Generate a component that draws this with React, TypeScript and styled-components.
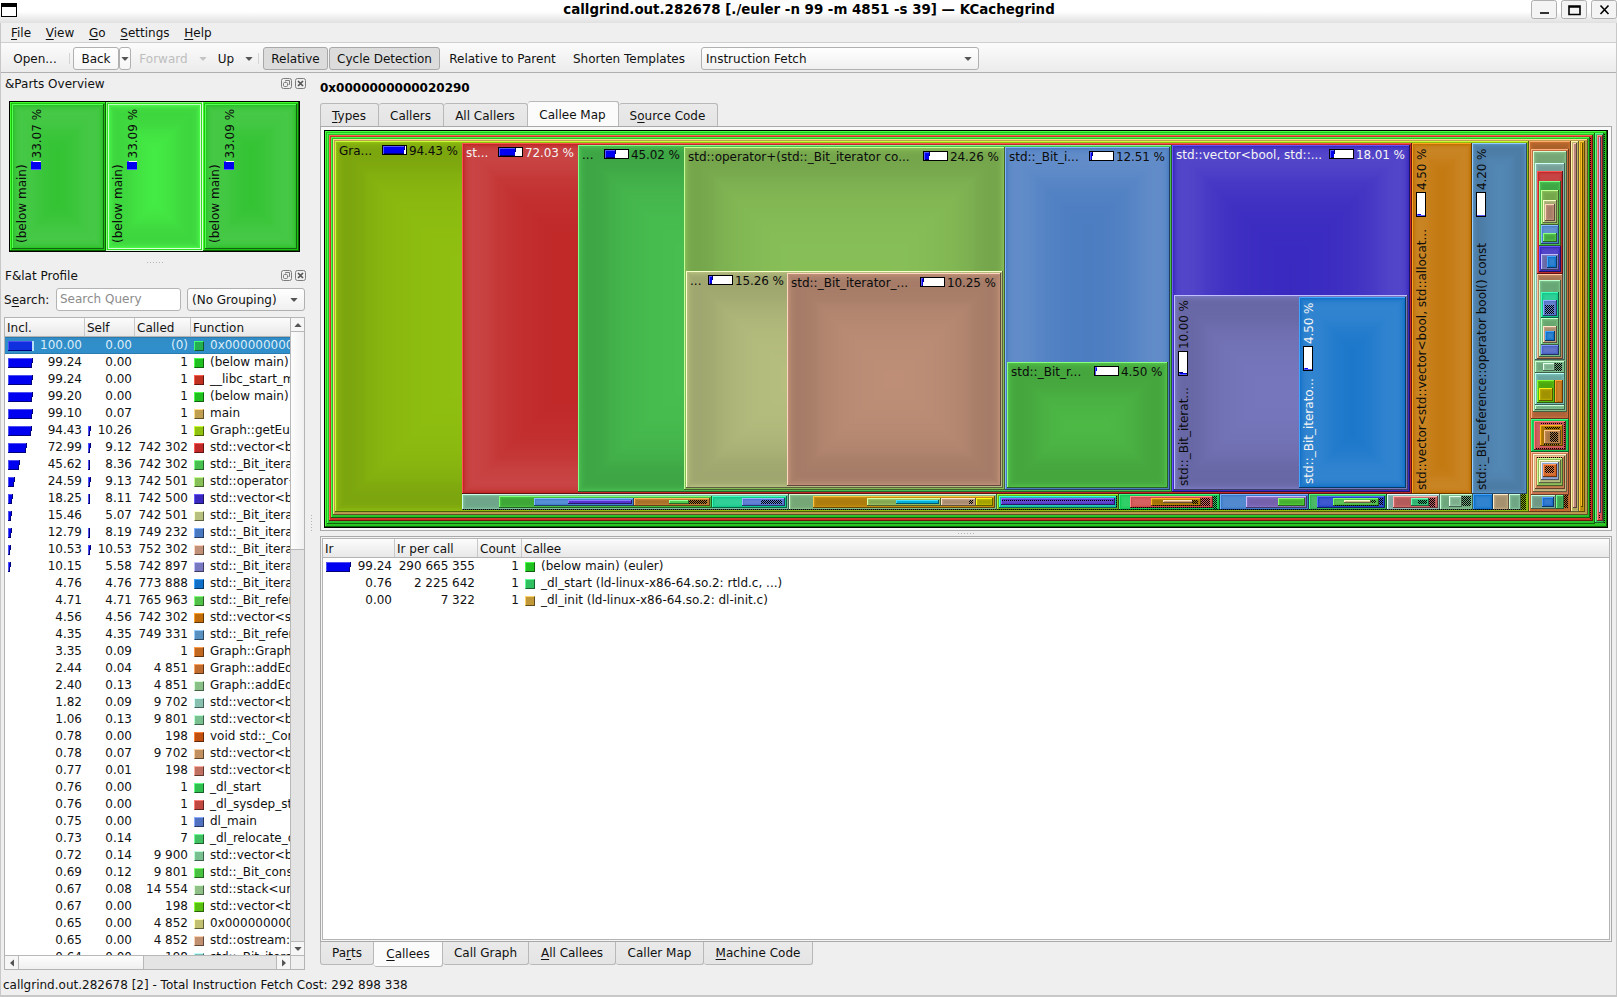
import React from 'react';
import styled, { createGlobalStyle, css } from 'styled-components';

const GlobalStyle = createGlobalStyle`
  * { box-sizing: border-box; }
  html, body { margin: 0; padding: 0; overflow: hidden; }
  body {
    font-family: "DejaVu Sans", sans-serif;
    font-size: 12px;
    color: #111;
    background: #efefef;
  }
`;

/* ---------- colour helpers (HSV lighten / darken and bevel shading) ---------- */

type RGB = [number, number, number];

const parse = (hex: string): RGB => [
  parseInt(hex.slice(1, 3), 16),
  parseInt(hex.slice(3, 5), 16),
  parseInt(hex.slice(5, 7), 16),
];
const css3 = (c: RGB) => `rgb(${c.map((v) => Math.max(0, Math.min(255, Math.round(v)))).join(',')})`;

function lighter(hex: string): string {
  const c = parse(hex);
  const max = Math.max(...c);
  const min = Math.min(...c);
  let sat = max === 0 ? 0 : (max - min) / max;
  let val = max * 1.5;
  if (val > 255) {
    sat = Math.max(0, sat - (val - 255) / 255);
    val = 255;
  }
  const span = max - min || 1;
  return css3(c.map((v) => val * (1 - sat * ((max - v) / span))) as RGB);
}
const darker = (hex: string) => css3(parse(hex).map((v) => v / 2) as RGB);

interface Step { inset: number; color: string }

function bevelSteps(hex: string, w: number, h: number): Step[] {
  const base = parse(hex);
  const gray = (base[0] * 11 + base[1] * 16 + base[2] * 5) / 32;
  const diff = base.map((v) => (gray > 128 ? -v / 7 : (255 - v) / 7));
  let factor = 0.1;
  let forth = 0.7;
  let back1 = 0.9;
  let back2 = 0.97;
  const s = Math.min(w, h);
  if (s < 100) {
    forth -= (0.3 * (100 - s)) / 100;
    back1 -= (0.2 * (100 - s)) / 100;
    back2 -= (0.02 * (100 - s)) / 100;
  }
  const steps: Step[] = [];
  let inset = 0;
  const push = () => {
    const color = css3(base.map((v, i) => v + factor * diff[i]) as RGB);
    const last = steps[steps.length - 1];
    if (!last || last.color !== color) steps.push({ inset, color });
  };
  const room = () => s - inset * 2 >= 2;
  while (factor < 0.95 && room()) { push(); inset += 1; factor = 1 - (1 - factor) * forth; }
  while (factor > 0.7 && room()) { push(); inset += 1; factor = 1 - (1 - factor) / back1; }
  while (factor > 0.01 && room()) { push(); inset += 1; factor *= back2; }
  push();
  return steps;
}

/* ---------- treemap ---------- */

// left, top, right, bottom, colour
type Cell = [number, number, number, number, string];

const MapCell = ({ cell, lit }: { cell: Cell; lit?: boolean }) => {
  const [l, t, r, b, color] = cell;
  const w = r - l;
  const h = b - t;
  return (
    <g>
      <rect x={l} y={t} width={w} height={h} fill={lit ? '#d8ffd8' : darker(color)} />
      <rect x={l} y={t} width={w - 1} height={h - 1} fill={lighter(color)} />
      {bevelSteps(color, w - 2, h - 2).map((st) => {
        const sw = w - 2 - st.inset * 2;
        const sh = h - 2 - st.inset * 2;
        return sw > 0 && sh > 0 ? (
          <rect key={st.inset} x={l + 1 + st.inset} y={t + 1 + st.inset} width={sw} height={sh} fill={st.color} />
        ) : null;
      })}
    </g>
  );
};

interface LabelProps {
  x: number;
  y: number;
  bar: number;
  pct: number;
  name: string;
  vertical?: boolean;
  light?: boolean;
}

const MapText = styled.text<{ $light?: boolean }>`
  font-family: "DejaVu Sans", sans-serif;
  font-size: 12px;
  fill: ${(p) => (p.$light ? '#f4f4f4' : '#0c0c0c')};
`;

const CostBar = ({ pct }: { pct: number }) => {
  const fill = (pct * 23) / 100;
  const w = Math.max(1, Math.ceil(fill));
  return (
    <g>
      <rect width="25" height="10" fill="#000" />
      <rect x="1" y="1" width="23" height="8" fill="#fff" />
      <rect x="1" y="1" width={w} height="4" fill="#0000f0" />
      <rect x="1" y="5" width={Math.max(1, w - 1)} height="4" fill="#0000f0" />
      <rect x="1" y="1" width={w} height="1" fill="#5858ff" />
      <rect x="1" y="1" width="1" height="8" fill="#5858ff" />
      {pct > 8 && <rect x={w} y="1" width="1" height="4" fill="#000078" />}
      {pct > 8 && <rect x="2" y="8" width={Math.max(1, w - 2)} height="1" fill="#000078" />}
    </g>
  );
};

// `x,y` is the name's baseline start; `bar` is the offset of the cost bar along it.
const MapLabel = ({ x, y, bar, pct, name, vertical, light }: LabelProps) => (
  <g transform={vertical ? `translate(${x} ${y}) rotate(-90)` : `translate(${x} ${y})`}>
    <MapText $light={light}>{name}</MapText>
    <g transform={`translate(${bar} -10)`}><CostBar pct={pct} /></g>
    <MapText $light={light} x={bar + 27} textLength={pct < 10 ? 41.5 : 49}>{pct.toFixed(2)} %</MapText>
  </g>
);

const MapSvg = styled.svg`
  display: block;
  flex: none;
`;

const cells: Cell[] = [
  [325, 131, 1607, 527, '#20c018'],
  [1595, 133, 1604, 523, '#30c058'],
  [1597, 135, 1603, 521, '#d04848'],
  [1599, 137, 1601, 513, '#6878d0'],
  [327, 133, 1595, 524, '#20c020'],
  [329, 135, 1593, 521, '#c83020'],
  [331, 137, 1590, 518, '#20c020'],
  [333, 139, 1588, 515, '#c0a050'],
  [335, 141, 1529, 512, '#90c010'],
  [462, 143, 1412, 494, '#c02626'],
  [578, 145, 1172, 492, '#48c050'],
  [684, 147, 1005, 490, '#88c058'],
  [686, 271, 1003, 488, '#b8c080'],
  [787, 273, 1001, 486, '#c09078'],
  [1005, 147, 1170, 490, '#487ac0'],
  [1007, 362, 1168, 488, '#50c048'],
  [1172, 145, 1410, 492, '#3828c0'],
  [1174, 295, 1408, 490, '#7878c0'],
  [1299, 297, 1406, 488, '#1070c8'],
  [1412, 143, 1472, 494, '#c07000'],
  [1472, 143, 1527, 494, '#5890c0'],

  [462, 494, 789, 510, '#80c0a0'],
  [499, 496, 712, 508, '#48c040'],
  [534, 498, 634, 506, '#4080d0'],
  [568, 500, 632, 504, '#5030d0'],
  [634, 498, 710, 506, '#c08030'],
  [669, 500, 689, 504, '#50d050'],
  [712, 496, 787, 508, '#10c888'],
  [742, 498, 785, 506, '#5070d0'],
  [789, 494, 997, 510, '#88c088'],
  [813, 496, 995, 508, '#c89010'],
  [867, 498, 941, 506, '#98c060'],
  [896, 500, 939, 504, '#00b0d8'],
  [941, 498, 976, 506, '#c0a080'],
  [976, 498, 993, 506, '#b8b800'],
  [997, 494, 1119, 510, '#68b020'],
  [999, 496, 1117, 508, '#10c0a8'],
  [1001, 498, 1115, 505, '#5030c8'],
  [1119, 494, 1220, 510, '#10c850'],
  [1130, 496, 1213, 508, '#d04848'],
  [1151, 498, 1201, 506, '#b88008'],
  [1163, 500, 1193, 503, '#d0a070'],
  [1220, 494, 1309, 510, '#3878c8'],
  [1246, 496, 1307, 508, '#8870c8'],
  [1278, 498, 1305, 506, '#50c838'],
  [1309, 494, 1387, 510, '#30b050'],
  [1317, 496, 1385, 508, '#2040c8'],
  [1333, 498, 1379, 506, '#48b840'],
  [1344, 500, 1371, 503, '#d0c080'],
  [1387, 494, 1440, 510, '#90c0b8'],
  [1393, 496, 1438, 508, '#d06868'],
  [1411, 498, 1429, 506, '#38c880'],
  [1440, 494, 1473, 510, '#80c090'],
  [1449, 496, 1462, 507, '#90c8a0'],
  [1473, 494, 1493, 510, '#1070c8'],
  [1493, 494, 1509, 510, '#c0a880'],
  [1509, 494, 1521, 510, '#80c098'],

  [1529, 141, 1571, 512, '#c87030'],
  [1531, 149, 1569, 419, '#c87040'],
  [1533, 151, 1567, 412, '#88c088'],
  [1535, 163, 1565, 360, '#88b8b0'],
  [1537, 171, 1563, 274, '#c02828'],
  [1539, 181, 1561, 246, '#48c050'],
  [1541, 190, 1559, 225, '#88c058'],
  [1543, 200, 1557, 223, '#b8c080'],
  [1545, 204, 1555, 221, '#c09078'],
  [1541, 225, 1559, 244, '#4a80c8'],
  [1543, 233, 1557, 242, '#50c048'],
  [1539, 246, 1561, 272, '#3828c0'],
  [1541, 254, 1559, 270, '#7878c0'],
  [1547, 256, 1557, 268, '#1070c8'],
  [1537, 274, 1563, 359, '#c08860'],
  [1539, 280, 1561, 357, '#78c088'],
  [1541, 292, 1559, 318, '#10c888'],
  [1543, 300, 1557, 316, '#5070c8'],
  [1541, 318, 1559, 345, '#78c080'],
  [1543, 326, 1557, 343, '#c0a080'],
  [1545, 331, 1555, 341, '#1070c8'],
  [1541, 345, 1559, 355, '#4860c0'],
  [1535, 361, 1565, 373, '#80c090'],
  [1543, 363, 1555, 371, '#90c8a0'],
  [1535, 373, 1565, 405, '#78c0b8'],
  [1537, 380, 1555, 403, '#58c010'],
  [1539, 388, 1553, 401, '#b8a800'],
  [1555, 380, 1563, 403, '#c07010'],
  [1535, 405, 1565, 410, '#80c090'],
  [1531, 419, 1569, 452, '#10c850'],
  [1534, 421, 1566, 450, '#c84848'],
  [1540, 425, 1563, 446, '#b88008'],
  [1544, 430, 1561, 444, '#c08850'],
  [1531, 452, 1569, 495, '#d07850'],
  [1533, 454, 1567, 492, '#c8b880'],
  [1535, 456, 1565, 489, '#c88050'],
  [1537, 458, 1563, 486, '#90c058'],
  [1539, 460, 1561, 483, '#b8c080'],
  [1541, 462, 1559, 480, '#90a8d0'],
  [1543, 464, 1557, 477, '#d06020'],
  [1531, 495, 1556, 509, '#80b098'],
  [1542, 497, 1554, 507, '#1868c8'],
  [1556, 495, 1564, 509, '#48b860'],
  [1571, 141, 1579, 512, '#c0b868'],
  [1573, 143, 1577, 508, '#b88878'],
  [1579, 141, 1585, 512, '#c89810'],
  [1581, 143, 1583, 507, '#b88808'],
];

// Areas too small to be subdivided are hatched: left, top, width, height
const hatches: [number, number, number, number][] = [
  [462, 509, 1065, 1], [689, 500, 18, 4], [761, 500, 21, 4], [969, 500, 4, 4],
  [1002, 500, 111, 1], [1116, 496, 1, 11], [1192, 500, 6, 4], [1152, 505, 48, 1],
  [1201, 498, 9, 8], [1131, 507, 82, 1], [1213, 496, 4, 13], [1371, 500, 5, 3],
  [1334, 505, 44, 1], [1379, 498, 4, 7], [1418, 500, 9, 4], [1429, 498, 6, 9],
  [1462, 496, 9, 10], [1521, 494, 5, 15], [1545, 305, 9, 9], [1555, 363, 7, 8],
  [1541, 423, 21, 1], [1564, 422, 1, 27], [1536, 448, 29, 1], [1545, 427, 15, 2],
  [1550, 432, 8, 10], [1543, 444, 16, 1], [1537, 457, 25, 1], [1545, 466, 9, 7],
  [1564, 495, 4, 13], [1590, 137, 1, 382], [1604, 133, 1, 390], [1599, 514, 1, 4],
];

const labels: LabelProps[] = [
  { x: 339, y: 155, bar: 43, pct: 94.43, name: 'Gra...' },
  { x: 466, y: 157, bar: 32, pct: 72.03, name: 'st...', light: true },
  { x: 582, y: 159, bar: 22, pct: 45.02, name: '...' },
  { x: 688, y: 161, bar: 235, pct: 24.26, name: 'std::operator+(std::_Bit_iterator co...' },
  { x: 690, y: 285, bar: 18, pct: 15.26, name: '...' },
  { x: 791, y: 287, bar: 129, pct: 10.25, name: 'std::_Bit_iterator_...' },
  { x: 1009, y: 161, bar: 80, pct: 12.51, name: 'std::_Bit_i...' },
  { x: 1011, y: 376, bar: 83, pct: 4.5, name: 'std::_Bit_r...' },
  { x: 1176, y: 159, bar: 153, pct: 18.01, name: 'std::vector<bool, std::...', light: true },
  { x: 1188, y: 486, bar: 110, pct: 10, name: 'std::_Bit_iterat...', vertical: true },
  { x: 1313, y: 484, bar: 113, pct: 4.5, name: 'std::_Bit_iterato...', vertical: true, light: true },
  { x: 1426, y: 490, bar: 273, pct: 4.5, name: 'std::vector<std::vector<bool, std::allocat...', vertical: true },
  { x: 1486, y: 490, bar: 273, pct: 4.2, name: 'std::_Bit_reference::operator bool() const', vertical: true },
];

const CalleeMap = () => (
  <MapSvg width="1284" height="398" viewBox="324 130 1284 398" shapeRendering="crispEdges">
    <defs>
      <pattern id="hatch" width="2" height="2" patternUnits="userSpaceOnUse">
        <rect width="1" height="1" fill="#000" />
        <rect x="1" y="1" width="1" height="1" fill="#000" />
      </pattern>
    </defs>
    <rect x="324" y="130" width="1284" height="398" fill="#000" />
    {cells.map((c, i) => <MapCell key={i} cell={c} />)}
    {hatches.map(([x, y, w, h], i) => <rect key={i} x={x} y={y} width={w} height={h} fill="url(#hatch)" />)}
    {labels.map((l, i) => <MapLabel key={i} {...l} />)}
  </MapSvg>
);

const parts = [
  { l: 1, r: 97, pct: '33.07 %', active: false },
  { l: 97, r: 194, pct: '33.09 %', active: true },
  { l: 194, r: 290, pct: '33.09 %', active: false },
];

const PartsMap = () => (
  <MapSvg width="291" height="151" shapeRendering="crispEdges">
    <rect width="291" height="151" fill="#000" />
    {parts.map((p) => (
      <g key={p.l}>
        <MapCell cell={[p.l, 1, p.r, 150, p.active ? '#30e020' : '#18c008']} lit={p.active} />
        <MapCell cell={[p.l + 2, 3, p.r - 2, 148, p.active ? '#48f848' : '#28c028']} lit={p.active} />
        <g transform={`translate(${p.l} 0)`}>
          <MapText transform="translate(16 142) rotate(-90)">(below main)</MapText>
          <rect x="21" y="60" width="10" height="9" fill="#fff" />
          <rect x="21" y="60" width="2" height="9" fill="#5858ff" />
          <rect x="21" y="61" width="10" height="8" fill="#0000f0" />
          <rect x="21" y="68" width="10" height="1" fill="#5858ff" />
          <MapText transform="translate(31 57.5) rotate(-90)">{p.pct}</MapText>
        </g>
      </g>
    ))}
  </MapSvg>
);

/* ---------- window chrome ---------- */

const Window = styled.div`
  width: 1617px;
  height: 997px;
  display: flex;
  flex-direction: column;
  overflow: hidden;
  white-space: nowrap;
`;

const TitleBar = styled.header`
  flex: none;
  height: 23px;
  padding: 0 0 0 1px;
  display: grid;
  grid-template-columns: 90px 1fr 90px;
  align-items: start;
  background: linear-gradient(#fff 0, #fff 50%, #e0e0e0 100%);
`;

const AppIcon = styled.svg`
  display: block;
  margin-top: 3px;
`;

const Title = styled.h1`
  margin: 0;
  font-size: 13.4px;
  line-height: 19px;
  font-weight: bold;
  text-align: center;
  color: #000;
`;

const WindowButtons = styled.div`
  display: flex;
  gap: 3px;
  justify-content: flex-end;
  svg { display: block; }
`;

const Frame = styled.div`
  flex: 1;
  min-height: 0;
  display: flex;
  flex-direction: column;
  border: solid #c8c8c8;
  border-width: 0 1px 2px;
`;

const MenuBar = styled.nav`
  flex: none;
  height: 20px;
  padding: 1px 0 0 10px;
  display: flex;
  gap: 14.7px;
  line-height: 19px;
  border-bottom: 1px solid #cfcfcf;
`;

const Key = styled.span`
  text-decoration: underline;
  text-decoration-skip-ink: none;
  text-underline-offset: 1.5px;
`;

const ToolBar = styled.div`
  flex: none;
  height: 30px;
  padding: 4px 0 0 4px;
  display: flex;
  align-items: flex-start;
  background: linear-gradient(#fbfbfb, #ececec);
  border-bottom: 1px solid #b0b0b0;
`;

const ToolButton = styled.button<{ $w: number; $look?: 'raised' | 'pressed' | 'disabled' }>`
  flex: none;
  width: ${(p) => p.$w}px;
  height: 23px;
  padding: 0;
  display: flex;
  align-items: center;
  justify-content: center;
  font: inherit;
  color: ${(p) => (p.$look === 'disabled' ? '#bebebe' : '#111')};
  background: none;
  border: 1px solid transparent;
  border-radius: 3px;
  ${(p) => p.$look === 'raised' && css`border-color: #b0b0b0; background: linear-gradient(#fff, #f6f6f6);`}
  ${(p) => p.$look === 'pressed' && css`border-color: #a8a8a8; background: #dcdcdc;`}
`;

const ToolSeparator = styled.span<{ $w: number; $blank?: boolean }>`
  flex: none;
  width: ${(p) => p.$w}px;
  height: 11px;
  margin-top: 6px;
  background: ${(p) => (p.$blank ? 'none' : 'linear-gradient(#d4d4d4, #d4d4d4) center / 1px 100% no-repeat')};
`;

const Combo = styled.div<{ $w: number }>`
  flex: none;
  width: ${(p) => p.$w}px;
  height: 23px;
  padding: 0 6px 0 4px;
  display: flex;
  align-items: center;
  justify-content: space-between;
  border: 1px solid #b0b0b0;
  border-radius: 3px;
  background: linear-gradient(#fff, #f0f0f0);
`;

const turns = { down: 0, left: 90, up: 180, right: 270 };

const Arrow = ({ dir = 'down', dim }: { dir?: keyof typeof turns; dim?: boolean }) => (
  <svg width="8" height="8" viewBox="0 0 8 8">
    <path d="M0.4 2H7.6L4.6 5.6H3.4Z" fill={dim ? '#c4c4c4' : '#555'} transform={`rotate(${turns[dir]} 4 4)`} />
  </svg>
);

const Body = styled.div`
  flex: 1;
  min-height: 0;
  display: flex;
`;

const SidePanel = styled.aside`
  flex: none;
  width: 308px;
  padding: 2px 3px 0 3px;
  display: flex;
  flex-direction: column;
`;

const DockTitle = styled.div`
  flex: none;
  height: 16px;
  padding: 0 0 0 1px;
  display: flex;
  align-items: center;
  gap: 3px;
  & > span { flex: 1; padding-top: 2px; }
`;

const PartsHolder = styled.div`
  flex: none;
  margin: 10px 0 0 5px;
  height: 151px;
`;

const Dots = styled.div<{ $vertical?: boolean }>`
  flex: none;
  width: ${(p) => (p.$vertical ? 1 : 17)}px;
  height: ${(p) => (p.$vertical ? 17 : 1)}px;
  background: repeating-linear-gradient(${(p) => (p.$vertical ? '180deg' : '90deg')}, #b4b4b4 0 1px, transparent 1px 3px);
`;

const HandleRow = styled.div<{ $h: number; $drop?: number }>`
  flex: none;
  height: ${(p) => p.$h}px;
  padding-top: ${(p) => p.$drop ?? 0}px;
  display: flex;
  align-items: center;
  justify-content: center;
`;

const HandleColumn = styled.div`
  flex: none;
  width: 11px;
  display: flex;
  align-items: center;
  padding-left: 2px;
`;

const SearchRow = styled.div`
  flex: none;
  margin: 5px 0 6px;
  height: 23px;
  display: flex;
  align-items: center;
`;

const SearchLabel = styled.label`
  width: 52px;
`;

const SearchBox = styled.div`
  width: 125px;
  height: 23px;
  margin-right: 6px;
  padding: 0 3px;
  line-height: 21px;
  color: #8c8c8c;
  background: #fff;
  border: 1px solid #b4b4b4;
  border-radius: 3px;
`;

const TableFrame = styled.div`
  flex: none;
  width: 301px;
  height: 653px;
  display: grid;
  grid-template-columns: 285px 14px;
  grid-template-rows: 637px 14px;
  background: #fff;
  border: 1px solid #b4b4b4;
`;

const TableView = styled.div`
  overflow: hidden;
`;

const HeaderRow = styled.div<{ $cols: string; $h: number }>`
  height: ${(p) => p.$h}px;
  display: grid;
  grid-template-columns: ${(p) => p.$cols};
  background: linear-gradient(#fcfcfc, #e8e8e8);
  border-bottom: 1px solid #b4b4b4;
`;

const HeaderCell = styled.div`
  padding: 0 0 0 2px;
  line-height: 20px;
  height: 18px;
  border-right: 1px solid #c8c8c8;
  &:last-child { border-right: 0; }
`;

const Row = styled.div<{ $cols: string; $selected?: boolean }>`
  height: 17px;
  line-height: 17px;
  display: grid;
  grid-template-columns: ${(p) => p.$cols};
  ${(p) => p.$selected && css`
    color: #dcecf8;
    background: linear-gradient(#308cc6, #3090cc);
    box-shadow: inset 0 1px #2a7cb0, inset 0 -1px #2a7cb0;
  `}
`;

const Num = styled.div`
  padding: 0 3px;
  display: flex;
  align-items: center;
  justify-content: space-between;
  & > span:last-child { margin-left: auto; }
`;

const Name = styled.div`
  padding-left: 3px;
  display: flex;
  align-items: center;
  gap: 6px;
  overflow: hidden;
`;

const Swatch = styled.span<{ $c: string }>`
  flex: none;
  width: 10px;
  height: 10px;
  background: ${(p) => p.$c};
  border: 1px solid;
  border-color: ${(p) => `${lighter(p.$c)} ${darker(p.$c)} ${darker(p.$c)} ${lighter(p.$c)}`};
`;

const RowBar = ({ pct, selected }: { pct: number; selected?: boolean }) => {
  if (pct < 8) return null;
  const full = pct * 0.25;
  const body = Math.floor(full);
  const wide = full - body < 0.13 ? body : body + 1;
  const fill = selected ? '#1030e0' : '#0000f0';
  return (
    <svg width="26" height="10" shapeRendering="crispEdges">
      <path d={`M0 0H${wide}V5H${body}V10H0Z`} fill="#000078" />
      {wide > 2 && <path d={`M0 0H${wide - 1}V5H${body - 1}V9H0Z`} fill={fill} />}
      <path d={`M0 0H${wide - 1}V1H1V9H0Z`} fill="#5050f0" />
      {selected && <path d="M25 0V10" stroke="#b8e0f8" strokeWidth="1.4" />}
    </svg>
  );
};

const ScrollTrack = styled.div<{ $vertical?: boolean }>`
  display: flex;
  flex-direction: ${(p) => (p.$vertical ? 'column' : 'row')};
  background: #e4e4e4;
  border: solid #b8b8b8;
  border-width: ${(p) => (p.$vertical ? '0 0 0 1px' : '1px 0 0 0')};
`;

const ScrollButton = styled.div<{ $vertical?: boolean }>`
  flex: none;
  width: ${(p) => (p.$vertical ? 13 : 14)}px;
  height: ${(p) => (p.$vertical ? 14 : 13)}px;
  display: flex;
  align-items: center;
  justify-content: center;
  background: #f6f6f6;
  border: solid #b8b8b8;
  border-width: ${(p) => (p.$vertical ? '0 0 1px' : '0 1px 0 0')};
  &:last-child { border-width: ${(p) => (p.$vertical ? '1px 0 0' : '0 0 0 1px')}; }
`;

const ScrollThumb = styled.div<{ $size: number; $vertical?: boolean }>`
  flex: none;
  ${(p) => (p.$vertical ? `height: ${p.$size}px;` : `width: ${p.$size}px;`)}
  margin-${(p) => (p.$vertical ? 'bottom' : 'right')}: auto;
  background: linear-gradient(${(p) => (p.$vertical ? '90deg' : '180deg')}, #fdfdfd, #f0f0f0);
  border: solid #b8b8b8;
  border-width: ${(p) => (p.$vertical ? '0 0 1px' : '0 1px 0 0')};
`;

const ScrollCorner = styled.div`
  background: #efefef;
  border: solid #b8b8b8;
  border-width: 1px 0 0 1px;
`;

const Main = styled.main`
  flex: none;
  width: 1292px;
  display: flex;
  flex-direction: column;
`;

const FunctionTitle = styled.div`
  flex: none;
  height: 28px;
  padding-top: 7px;
  line-height: 17px;
  font-weight: bold;
  color: #000;
`;

const TabStrip = styled.div<{ $bottom?: boolean }>`
  flex: none;
  height: 25px;
  display: flex;
  align-items: ${(p) => (p.$bottom ? 'flex-start' : 'flex-end')};
`;

const Tab = styled.div<{ $w: number; $active?: boolean; $bottom?: boolean }>`
  flex: none;
  width: ${(p) => p.$w}px;
  height: ${(p) => (p.$active ? 25 : 23)}px;
  line-height: 22px;
  padding-top: ${(p) => (p.$active ? 2 : 1)}px;
  padding-right: 1px;
  text-align: center;
  background: ${(p) => (p.$active ? '#fbfbfb' : 'linear-gradient(#eaeaea, #e4e4e4)')};
  border: 1px solid #b8b8b8;
  border-left-width: 0;
  &:first-child { border-left-width: 1px; }
  ${(p) => p.$bottom
    ? css`border-top: 0; border-radius: 0 0 3px 3px; padding-right: 0; line-height: 21px;`
    : css`border-bottom: 0; border-radius: 3px 3px 0 0;`}
`;

const MapPane = styled.section`
  flex: none;
  height: 405px;
  padding: 3px;
  background: #f9f9f9;
  border: 1px solid #a9a9a9;
`;

const ListPane = styled.section`
  flex: none;
  height: 406px;
  padding: 1px;
  background: #f4f4f4;
  border: 1px solid #a9a9a9;
`;

const ListFrame = styled.div`
  height: 402px;
  background: #fff;
  border: 1px solid #b4b4b4;
`;

const StatusBar = styled.footer`
  flex: none;
  height: 21px;
  padding: 1px 0 0 2px;
  line-height: 20px;
`;

const DockButtons = () => (
  <svg width="26" height="12" viewBox="0 0 26 12" fill="none" stroke="#7c7c7c">
    <rect x="1.5" y="1.5" width="10" height="10" rx="2" />
    <rect x="3.5" y="5.5" width="4" height="4" rx="1" />
    <path d="M5.5 4.5V3.5H9.5V7.5H8.5" />
    <rect x="15.5" y="1.5" width="10" height="10" rx="2" />
    <path d="M18 4L23 9M23 4L18 9" stroke="#555" strokeWidth="1.7" />
  </svg>
);

/* ---------- data ---------- */

type ProfileRow = [number, number, string, string, string];

const profile: ProfileRow[] = [
  [100, 0, '(0)', '#24b050', '0x0000000000020290'],
  [99.24, 0, '1', '#20c020', '(below main)'],
  [99.24, 0, '1', '#c03020', '__libc_start_main@@GLIBC'],
  [99.2, 0, '1', '#20c020', '(below main)'],
  [99.1, 0.07, '1', '#c0a050', 'main'],
  [94.43, 10.26, '1', '#90c010', 'Graph::getEulerPath'],
  [72.99, 9.12, '742 302', '#c02828', 'std::vector<bool, std::all'],
  [45.62, 8.36, '742 302', '#48c050', 'std::_Bit_iterator::opera'],
  [24.59, 9.13, '742 501', '#88c058', 'std::operator+(std::_Bit'],
  [18.25, 8.11, '742 500', '#3828c0', 'std::vector<bool, std::all'],
  [15.46, 5.07, '742 501', '#b8c080', 'std::_Bit_iterator::opera'],
  [12.79, 8.19, '749 232', '#4878c0', 'std::_Bit_iterator::opera'],
  [10.53, 10.53, '752 302', '#c09078', 'std::_Bit_iterator_base'],
  [10.15, 5.58, '742 897', '#7878c0', 'std::_Bit_iterator::_Bit'],
  [4.76, 4.76, '773 888', '#1070c8', 'std::_Bit_iterator_base'],
  [4.71, 4.71, '765 963', '#50c048', 'std::_Bit_reference::_Bit'],
  [4.56, 4.56, '742 302', '#c06c08', 'std::vector<std::vector'],
  [4.35, 4.35, '749 331', '#5890c0', 'std::_Bit_reference::op'],
  [3.35, 0.09, '1', '#c06820', 'Graph::Graph(int, int)'],
  [2.44, 0.04, '4 851', '#c06c30', 'Graph::addEdge(int, int)'],
  [2.4, 0.13, '4 851', '#88c088', 'Graph::addEdge(int, int)'],
  [1.82, 0.09, '9 702', '#88c0b0', 'std::vector<bool, std::all'],
  [1.06, 0.13, '9 801', '#78c090', 'std::vector<bool, std::all'],
  [0.78, 0, '198', '#c05010', 'void std::_Construct'],
  [0.78, 0.07, '9 702', '#c09060', 'std::vector<bool, std::all'],
  [0.77, 0.01, '198', '#c07060', 'std::vector<bool, std::all'],
  [0.76, 0, '1', '#30c050', '_dl_start'],
  [0.76, 0, '1', '#c04840', '_dl_sysdep_start'],
  [0.75, 0, '1', '#5070c0', 'dl_main'],
  [0.73, 0.14, '7', '#40c060', '_dl_relocate_object'],
  [0.72, 0.14, '9 900', '#78c090', 'std::vector<bool, std::all'],
  [0.69, 0.12, '9 801', '#48c040', 'std::_Bit_const_iterator'],
  [0.67, 0.08, '14 554', '#90c088', 'std::stack<unsigned int'],
  [0.67, 0, '198', '#58c010', 'std::vector<bool, std::all'],
  [0.65, 0, '4 852', '#c0c070', '0x0000000000109250'],
  [0.65, 0, '4 852', '#c09070', 'std::ostream::operator'],
  [0.64, 0, '198', '#78c0b8', 'std::_Bit_iterator std::'],
];

const callees: [number, string, string, string, string][] = [
  [99.24, '290 665 355', '1', '#20c020', '(below main) (euler)'],
  [0.76, '2 225 642', '1', '#30c060', '_dl_start (ld-linux-x86-64.so.2: rtld.c, ...)'],
  [0, '7 322', '1', '#c09838', '_dl_init (ld-linux-x86-64.so.2: dl-init.c)'],
];

const PROFILE_COLS = '80px 50px 56px 1fr';
const CALLEE_COLS = '72px 83px 44px 1fr';

const menus: [string, string][] = [['F', 'ile'], ['V', 'iew'], ['G', 'o'], ['S', 'ettings'], ['H', 'elp']];

export default function App() {
  return (
    <Window>
      <GlobalStyle />
      <TitleBar>
        <AppIcon width="16" height="15" shapeRendering="crispEdges">
          <rect x="0.5" y="0.5" width="15" height="13" fill="#fff" stroke="#000" />
          <rect width="16" height="4" fill="#000" />
        </AppIcon>
        <Title>callgrind.out.282678 [./euler -n 99 -m 4851 -s 39] — KCachegrind</Title>
        <WindowButtons>
          {['M10 13H19', 'M9 6H20V14.5H9ZM9 7H20', 'M10.5 5.5L18.5 14M18.5 5.5L10.5 14'].map((d) => (
            <svg key={d} width="27" height="20" fill="none">
              <rect x="1.5" y="0.5" width="25" height="18" rx="2" fill="#f4f4f4" stroke="#b0b0b0" />
              <path d={d} stroke="#000" strokeWidth="1.6" />
            </svg>
          ))}
        </WindowButtons>
      </TitleBar>
      <Frame>
        <MenuBar>
          {menus.map(([k, rest]) => <span key={k}><Key>{k}</Key>{rest}</span>)}
        </MenuBar>
        <ToolBar>
          <ToolButton $w={60}>Open...</ToolButton>
          <ToolSeparator $w={8} />
          <ToolButton $w={46} $look="raised">Back</ToolButton>
          <ToolButton $w={12} $look="raised"><Arrow /></ToolButton>
          <ToolButton $w={65} $look="disabled">Forward</ToolButton>
          <ToolButton $w={13} $look="disabled"><Arrow dim /></ToolButton>
          <ToolButton $w={34}>Up</ToolButton>
          <ToolButton $w={11}><Arrow /></ToolButton>
          <ToolSeparator $w={9} />
          <ToolButton $w={65} $look="pressed">Relative</ToolButton>
          <ToolSeparator $w={1} $blank />
          <ToolButton $w={111} $look="pressed">Cycle Detection</ToolButton>
          <ToolButton $w={125}>Relative to Parent</ToolButton>
          <ToolButton $w={128}>Shorten Templates</ToolButton>
          <ToolSeparator $w={8} $blank />
          <Combo $w={278}>Instruction Fetch<Arrow /></Combo>
        </ToolBar>
        <Body>
          <SidePanel>
            <DockTitle><span>&amp;Parts Overview</span><DockButtons /></DockTitle>
            <PartsHolder><PartsMap /></PartsHolder>
            <HandleRow $h={15} $drop={5}><Dots /></HandleRow>
            <DockTitle><span>F&amp;lat Profile</span><DockButtons /></DockTitle>
            <SearchRow>
              <SearchLabel>S<Key>e</Key>arch:</SearchLabel>
              <SearchBox>Search Query</SearchBox>
              <Combo $w={118}>(No Grouping)<Arrow /></Combo>
            </SearchRow>
            <TableFrame>
              <TableView>
                <HeaderRow $cols={PROFILE_COLS} $h={19}>
                  <HeaderCell>Incl.</HeaderCell>
                  <HeaderCell>Self</HeaderCell>
                  <HeaderCell>Called</HeaderCell>
                  <HeaderCell>Function</HeaderCell>
                </HeaderRow>
                {profile.map(([incl, self, called, color, name], i) => (
                  <Row key={i} $cols={PROFILE_COLS} $selected={i === 0}>
                    <Num><RowBar pct={incl} selected={i === 0} /><span>{incl.toFixed(2)}</span></Num>
                    <Num><RowBar pct={self} /><span>{self.toFixed(2)}</span></Num>
                    <Num><span>{called}</span></Num>
                    <Name><Swatch $c={color} />{name}</Name>
                  </Row>
                ))}
              </TableView>
              <ScrollTrack $vertical>
                <ScrollButton $vertical><Arrow dir="up" /></ScrollButton>
                <ScrollThumb $vertical $size={218} />
                <ScrollButton $vertical><Arrow /></ScrollButton>
              </ScrollTrack>
              <ScrollTrack>
                <ScrollButton><Arrow dir="left" /></ScrollButton>
                <ScrollThumb $size={125} />
                <ScrollButton><Arrow dir="right" /></ScrollButton>
              </ScrollTrack>
              <ScrollCorner />
            </TableFrame>
          </SidePanel>
          <HandleColumn><Dots $vertical /></HandleColumn>
          <Main>
            <FunctionTitle>0x0000000000020290</FunctionTitle>
            <TabStrip>
              <Tab $w={59}><Key>T</Key>ypes</Tab>
              <Tab $w={65}>Callers</Tab>
              <Tab $w={84}>All Callers</Tab>
              <Tab $w={91} $active>Callee Map</Tab>
              <Tab $w={99}>S<Key>o</Key>urce Code</Tab>
            </TabStrip>
            <MapPane><CalleeMap /></MapPane>
            <HandleRow $h={5}><Dots /></HandleRow>
            <ListPane>
              <ListFrame>
                <HeaderRow $cols={CALLEE_COLS} $h={19}>
                  <HeaderCell>Ir</HeaderCell>
                  <HeaderCell>Ir per call</HeaderCell>
                  <HeaderCell>Count</HeaderCell>
                  <HeaderCell>Callee</HeaderCell>
                </HeaderRow>
                {callees.map(([pct, per, count, color, name]) => (
                  <Row key={name} $cols={CALLEE_COLS}>
                    <Num><RowBar pct={pct} /><span>{pct.toFixed(2)}</span></Num>
                    <Num><span>{per}</span></Num>
                    <Num><span>{count}</span></Num>
                    <Name><Swatch $c={color} />{name}</Name>
                  </Row>
                ))}
              </ListFrame>
            </ListPane>
            <TabStrip $bottom>
              <Tab $bottom $w={54}>Pa<Key>r</Key>ts</Tab>
              <Tab $bottom $w={69} $active><Key>C</Key>allees</Tab>
              <Tab $bottom $w={86}>Call Graph</Tab>
              <Tab $bottom $w={87}><Key>A</Key>ll Callees</Tab>
              <Tab $bottom $w={88}>Caller Map</Tab>
              <Tab $bottom $w={109}><Key>M</Key>achine Code</Tab>
            </TabStrip>
          </Main>
        </Body>
        <StatusBar>callgrind.out.282678 [2] - Total Instruction Fetch Cost: 292 898 338</StatusBar>
      </Frame>
    </Window>
  );
}
